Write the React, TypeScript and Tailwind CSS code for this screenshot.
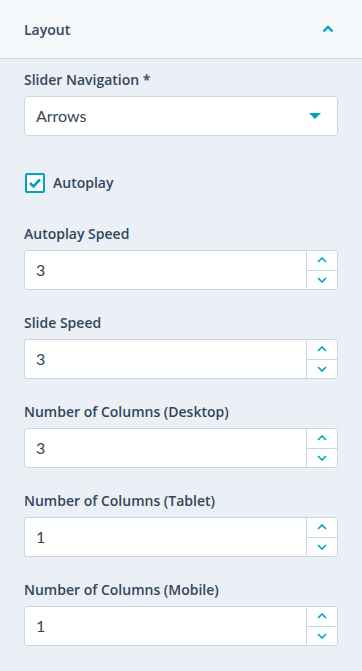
import { useState } from 'react';

const font = { fontFamily: 'Lato, "Noto Sans", sans-serif' };
const labelFont = { fontFamily: '"Open Sans", "Noto Sans", sans-serif' };

function NumberField({ label, value }: { label: string; value: string }) {
  return (
    <div className="flex flex-col">
      <label style={labelFont} className="text-[14px] font-semibold text-[#33475b] leading-[20px] mb-[6px]">
        {label}
      </label>
      <div className="flex h-[40px] w-[314px] bg-white border border-[#cbd6e2] rounded-[3px]">
        <div className="flex-1 flex items-center pl-[11px] text-[16px] text-[#33475b]">{value}</div>
        <div className="w-[31px] flex flex-col border-l border-[#cbd6e2] bg-white rounded-r-[3px]">
          <button className="flex-1 flex items-center justify-center border-b border-[#cbd6e2]">
            <svg width="10" height="6" viewBox="0 0 10 6" fill="none">
              <path d="M1 5l4-4 4 4" stroke="#00a4bd" strokeWidth="1.6" />
            </svg>
          </button>
          <button className="flex-1 flex items-center justify-center">
            <svg width="10" height="6" viewBox="0 0 10 6" fill="none">
              <path d="M1 1l4 4 4-4" stroke="#00a4bd" strokeWidth="1.6" />
            </svg>
          </button>
        </div>
      </div>
    </div>
  );
}

export default function App() {
  const [autoplay, setAutoplay] = useState(true);

  return (
    <div className="w-[362px] h-[671px] bg-[#eaf0f6] overflow-hidden" style={font}>
      <div className="h-[59px] flex items-center justify-between pl-[24px] pr-[28px] bg-[#f5f8fa] border-b border-[#cbd6e2]">
        <span style={labelFont} className="text-[14px] font-semibold text-[#33475b]">Layout</span>
        <svg width="12" height="8" viewBox="0 0 12 8" fill="none">
          <path d="M1.5 6.5L6 2l4.5 4.5" stroke="#00a4bd" strokeWidth="2.4" />
        </svg>
      </div>

      <div className="px-[24px] pt-[11px] flex flex-col">
        <label style={labelFont} className="text-[14px] font-semibold text-[#33475b] leading-[20px] mb-[6px]">
          Slider Navigation *
        </label>
        <div className="flex items-center justify-between h-[40px] w-[314px] bg-white border border-[#cbd6e2] rounded-[3px] pl-[11px] pr-[16px]">
          <span className="text-[16px] text-[#33475b]">Arrows</span>
          <svg width="12" height="7" viewBox="0 0 12 7">
            <path d="M0 0h12L6 6z" fill="#00a4bd" />
          </svg>
        </div>

        <label className="flex items-center gap-[8px] mt-[36px] cursor-pointer">
          <span
            onClick={() => setAutoplay(!autoplay)}
            className="ml-[1px] w-[20px] h-[20px] border-2 border-[#00a4bd] rounded-[2px] bg-white flex items-center justify-center"
          >
            {autoplay && (
              <svg width="12" height="10" viewBox="0 0 12 10" fill="none">
                <path d="M1 5l3.5 3.5L11 1.5" stroke="#00a4bd" strokeWidth="2.6" />
              </svg>
            )}
          </span>
          <span style={labelFont} className="text-[14px] font-semibold text-[#33475b]">Autoplay</span>
        </label>

        <div className="flex flex-col gap-[23px] mt-[31px]">
          <NumberField label="Autoplay Speed" value="3" />
          <NumberField label="Slide Speed" value="3" />
          <NumberField label="Number of Columns (Desktop)" value="3" />
          <NumberField label="Number of Columns (Tablet)" value="1" />
          <NumberField label="Number of Columns (Mobile)" value="1" />
        </div>
      </div>
    </div>
  );
}
